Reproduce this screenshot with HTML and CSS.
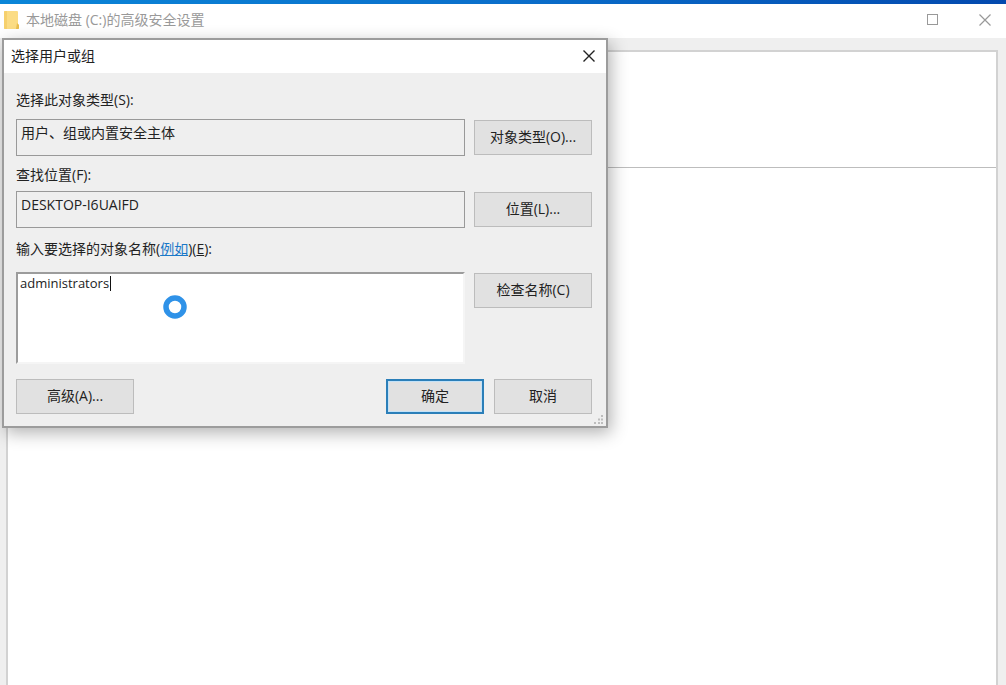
FILE: index.html
```html
<!DOCTYPE html>
<html lang="zh-CN">
<head>
<meta charset="utf-8">
<title>本地磁盘 (C:)的高级安全设置</title>
<link rel="stylesheet" href="styles.css">
</head>
<body>
<main class="window">
  <header class="window-bar">
    <svg class="folder" width="18" height="20" viewBox="0 0 18 20" aria-hidden="true">
      <path d="M2 1h12q1 0 1 1v12l1 1v3q0 1-1 1H2q-1 0-1-1V2q0-1 1-1z" fill="#fbdc84"/>
      <path d="M14 13l2 2v3q0 1-1 1h-2z" fill="#e9bd4d"/>
      <path d="M1 2v16q0 1 1 1h2V1H2Q1 1 1 2z" fill="#f6d06c"/>
    </svg>
    <h1 class="window-title">本地磁盘 (C:)的高级安全设置</h1>
    <button class="window-button" type="button" aria-label="最大化">
      <svg width="14" height="14" viewBox="0 0 14 14"><rect x="1.500" y="1.500" width="10" height="10" fill="none" stroke="currentColor"/></svg>
    </button>
    <button class="window-button" type="button" aria-label="关闭">
      <svg width="14" height="14" viewBox="0 0 14 14"><path d="M1.500 1.500l11 11M12.500 1.500l-11 11" fill="none" stroke="currentColor" stroke-width="1.200"/></svg>
    </button>
  </header>
  <div class="window-body">
    <section class="panel"><div class="panel-head"></div></section>
  </div>
</main>

<form class="dialog" role="dialog" aria-labelledby="dialog-title">
  <header class="dialog-bar">
    <h2 class="dialog-title" id="dialog-title">选择用户或组</h2>
    <button class="dialog-close" type="button" aria-label="关闭">
      <svg width="14" height="14" viewBox="0 0 14 14"><path d="M1.500 1.500l11 11M12.500 1.500l-11 11" fill="none" stroke="currentColor" stroke-width="1.400"/></svg>
    </button>
  </header>
  <div class="dialog-body">
    <label class="label label-type" for="type">选择此对象类型(S):</label>
    <input class="field" id="type" type="text" readonly value="用户、组或内置安全主体">
    <button class="button" type="button">对象类型(O)...</button>

    <label class="label label-place" for="place">查找位置(F):</label>
    <input class="field" id="place" type="text" readonly value="DESKTOP-I6UAIFD">
    <button class="button" type="button">位置(L)...</button>

    <label class="label label-names" for="names">输入要选择的对象名称(<a class="link" href="#names">例如</a>)(<u>E</u>):</label>
    <div class="names-box">
      <textarea class="names" id="names" spellcheck="false">administrators</textarea>
      <span class="caret"></span>
      <svg class="busy" width="26" height="26" viewBox="0 0 26 26" aria-hidden="true">
        <circle cx="13" cy="13" r="9" fill="#fff" stroke="#2f92e8" stroke-width="5.500"/>
      </svg>
    </div>
    <button class="button button-check" type="button">检查名称(C)</button>

    <footer class="actions">
      <button class="button button-advanced" type="button">高级(A)...</button>
      <button class="button button-small button-default" type="submit">确定</button>
      <button class="button button-small" type="button">取消</button>
    </footer>
  </div>
  <svg class="grip" width="10" height="10" viewBox="0 0 10 10" aria-hidden="true">
    <path d="M7 0h2v2h-2zM4 3.500h2v2h-2zM7 3.500h2v2h-2zM0 7h2v2h-2zM4 7h2v2h-2zM7 7h2v2h-2z" fill="#bdbdbd"/>
  </svg>
</form>
</body>
</html>
```

FILE: styles.css
```css
* {
  box-sizing: border-box;
}

body {
  margin: 0;
  color: #222;
  font: 14px/20px "Open Sans", "Noto Sans CJK SC", sans-serif;
}

button,
input,
textarea {
  margin: 0;
  color: inherit;
  font: inherit;
}

.window {
  display: flex;
  flex-direction: column;
  height: 100vh;
  overflow: hidden;
  background: #efefef;
}

.window::before {
  content: "";
  flex: none;
  height: 4px;
  background: linear-gradient(90deg, #0a86d8, #0a6fcb 50%, #0349ae);
}

.window-bar {
  display: flex;
  flex: none;
  align-items: center;
  height: 34px;
  padding: 0 6px 2px 3px;
  background: #fff;
  color: #999;
}

.folder {
  margin-right: 5px;
}

.window-title {
  flex: 1;
  margin: 0;
  font-size: 14px;
  font-weight: 400;
}

.window-button {
  display: grid;
  place-items: center;
  width: 30px;
  height: 30px;
  padding: 0;
  border: 0;
  background: none;
}

.window-button + .window-button {
  margin-left: 22px;
}

.window-body {
  display: flex;
  flex: 1;
  padding: 12px 8px 0 6px;
}

.panel {
  flex: 1;
  border: 2px solid #d2d2d2;
  border-bottom: 0;
  background: #fff;
}

.panel-head {
  height: 116px;
  border-bottom: 1px solid #bdbdbd;
}

.dialog {
  position: absolute;
  top: 38px;
  left: 2px;
  width: 606px;
  border: 2px solid #9c9c9c;
  background: #efefef;
  box-shadow: 3px 5px 16px rgba(0, 0, 0, 0.3);
}

.dialog-bar {
  display: flex;
  align-items: center;
  justify-content: space-between;
  height: 33px;
  padding: 0 2px 2px 7px;
  background: #fff;
}

.dialog-title {
  margin: 0;
  font-size: 14px;
  font-weight: 400;
}

.dialog-close {
  display: grid;
  place-items: center;
  width: 30px;
  height: 30px;
  padding: 0;
  border: 0;
  background: none;
}

.dialog-body {
  display: grid;
  grid-template-columns: 1fr 118px;
  column-gap: 9px;
  align-items: center;
  padding: 17px 14px 12px 12px;
}

.label {
  grid-column: 1 / -1;
  justify-self: start;
}

.label-type {
  margin-bottom: 9px;
}

.label-place {
  margin: 9px 0 6px;
}

.label-names {
  margin: 11px 0 13px;
}

.link {
  color: #1a78c8;
}

.field {
  width: 100%;
  height: 37px;
  padding: 0 4px 11px;
  border: 1px solid #999;
  outline: 0;
  background: #efefef;
}

.button {
  height: 35px;
  padding: 0 0 2px;
  border: 1px solid #bcbcbc;
  background: #e1e1e1;
}

.names-box {
  position: relative;
  height: 92px;
}

.names {
  display: block;
  width: 100%;
  height: 100%;
  padding: 0 2px;
  border: 2px solid #9c9c9c;
  border-right-color: #f5f5f5;
  border-bottom-color: #f5f5f5;
  outline: 0;
  background: #fff;
  font-size: 13px;
  line-height: 18px;
  resize: none;
}

.caret {
  position: absolute;
  top: 4px;
  left: 94px;
  width: 1px;
  height: 15px;
  background: #111;
}

.busy {
  position: absolute;
  top: 22px;
  left: 146px;
}

.button-check {
  align-self: start;
  margin-top: 1px;
}

.actions {
  display: flex;
  grid-column: 1 / -1;
  gap: 10px;
  margin-top: 15px;
}

.button-advanced {
  width: 118px;
  margin-right: auto;
}

.button-small {
  width: 98px;
}

.button-default {
  border: 2px solid #2b7fb9;
  box-shadow: inset 0 0 0 1px #c3e2f8;
}

.grip {
  position: absolute;
  right: 2px;
  bottom: 1px;
}
```
